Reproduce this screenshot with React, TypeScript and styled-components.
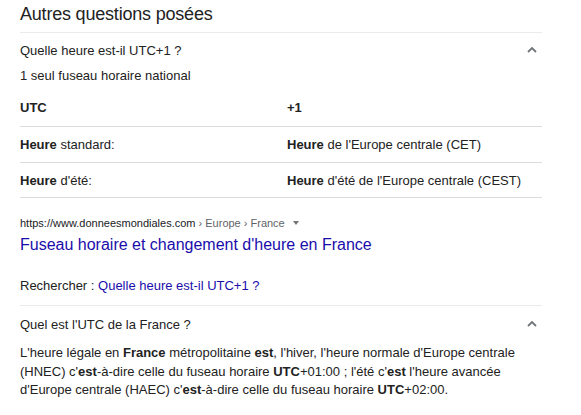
import styled, {createGlobalStyle} from 'styled-components';

const GlobalStyle = createGlobalStyle`
  body {
    margin: 0;
    background: #ffffff;
    font-family: "Liberation Sans", Arial, sans-serif;
    color: #222222;
  }
`;

const Container = styled.div`
  width: 522px;
  padding: 0 0 0 20px;
  display: flex;
  flex-direction: column;
`;

const HeaderText = styled.div`
  font-size: 18px;
  letter-spacing: -0.2px;
  line-height: 28px;
  height: 32px;
  border-bottom: 1px solid #ebebeb;
  color: #222222;
`;

const QuestionRow = styled.div<{$height: number}>`
  display: flex;
  align-items: center;
  justify-content: space-between;
  height: ${(p) => p.$height}px;
  font-size: 13px;
  color: #222222;
`;

const Chevron = styled.svg`
  width: 12px;
  height: 12px;
  margin-right: 4px;
  fill: none;
  stroke: #70757a;
  stroke-width: 1.8;
`;

const AnswerText = styled.div`
  font-size: 13px;
  line-height: 18px;
`;

const Table = styled.div`
  display: flex;
  flex-direction: column;
  margin-top: 4px;
`;

const TableRow = styled.div<{$height: number}>`
  display: grid;
  grid-template-columns: 267px 1fr;
  align-items: center;
  height: ${(p) => p.$height}px;
  border-bottom: 1px solid #dadce0;
  font-size: 13px;
`;

const Bold = styled.b`
  font-weight: bold;
  color: #222222;
`;

const Source = styled.div`
  margin-top: 17px;
  display: flex;
  flex-direction: column;
`;

const UrlLine = styled.div`
  font-size: 11px;
  line-height: 16px;
  color: #202124;
  display: flex;
  align-items: center;
`;

const Crumb = styled.span`
  color: #5f6368;
`;

const Caret = styled.span`
  display: inline-block;
  margin-left: 8px;
  width: 0;
  height: 0;
  border-left: 3px solid transparent;
  border-right: 3px solid transparent;
  border-top: 4px solid #70757a;
`;

const TitleLink = styled.a`
  font-size: 16px;
  line-height: 24px;
  margin-top: 2px;
  color: #1a0dab;
  text-decoration: none;
`;

const SearchLine = styled.div`
  margin-top: 20px;
  font-size: 13px;
  line-height: 18px;
  padding-bottom: 10px;
  border-bottom: 1px solid #ebebeb;
`;

const SearchLink = styled.a`
  color: #1a0dab;
  text-decoration: none;
`;

const Paragraph = styled.div`
  font-size: 13px;
  line-height: 18.5px;
  margin-top: 2px;
  width: 505px;
`;

function ChevronUp() {
  return (
    <Chevron viewBox="0 0 12 12">
      <path d="M2 8 L6 4 L10 8" />
    </Chevron>
  );
}

export default function App() {
  return (
    <>
      <GlobalStyle />
      <Container>
        <HeaderText>Autres questions posées</HeaderText>
        <QuestionRow $height={34}>
          <span>Quelle heure est-il UTC+1 ?</span>
          <ChevronUp />
        </QuestionRow>
        <AnswerText>1 seul fuseau horaire national</AnswerText>
        <Table>
          <TableRow $height={37}>
            <Bold>UTC</Bold>
            <Bold>+1</Bold>
          </TableRow>
          <TableRow $height={35}>
            <span>
              <Bold>Heure</Bold> standard:
            </span>
            <span>
              <Bold>Heure</Bold> de l'Europe centrale (CET)
            </span>
          </TableRow>
          <TableRow $height={34}>
            <span>
              <Bold>Heure</Bold> d'été:
            </span>
            <span>
              <Bold>Heure</Bold> d'été de l'Europe centrale (CEST)
            </span>
          </TableRow>
        </Table>
        <Source>
          <UrlLine>
            https://www.donneesmondiales.com
            <Crumb>&nbsp;› Europe › France</Crumb>
            <Caret />
          </UrlLine>
          <TitleLink href="#">
            Fuseau horaire et changement d'heure en France
          </TitleLink>
        </Source>
        <SearchLine>
          Rechercher : <SearchLink href="#">Quelle heure est-il UTC+1 ?</SearchLink>
        </SearchLine>
        <QuestionRow $height={36}>
          <span>Quel est l'UTC de la France ?</span>
          <ChevronUp />
        </QuestionRow>
        <Paragraph>
          L'heure légale en <Bold>France</Bold> métropolitaine <Bold>est</Bold>,
          l'hiver, l'heure normale d'Europe centrale (HNEC) c'<Bold>est</Bold>-à-dire
          celle du fuseau horaire <Bold>UTC</Bold>+01:00 ; l'été c'<Bold>est</Bold>{' '}
          l'heure avancée d'Europe centrale (HAEC) c'<Bold>est</Bold>-à-dire celle
          du fuseau horaire <Bold>UTC</Bold>+02:00.
        </Paragraph>
      </Container>
    </>
  );
}
